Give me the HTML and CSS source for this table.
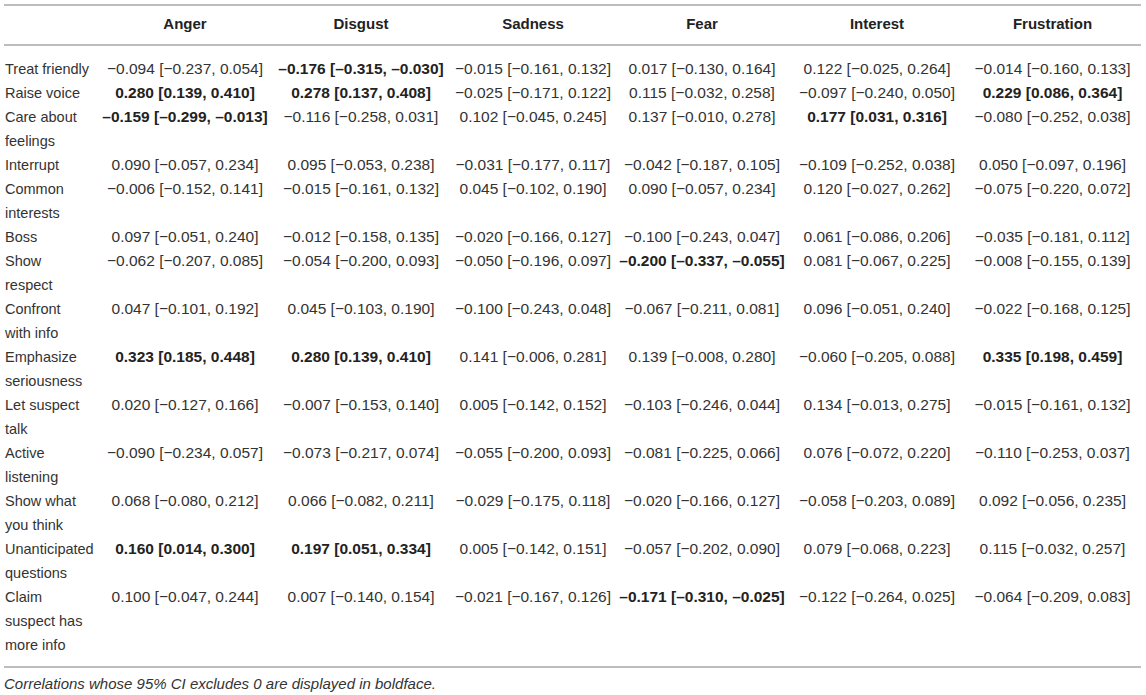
FILE: index.html
```html
<!DOCTYPE html>
<html lang="en">
<head>
  <meta charset="UTF-8" />
  <meta name="viewport" content="width=device-width, initial-scale=1.0" />
  <title>Correlations between interview behaviours and emotions</title>
  <link rel="stylesheet" href="styles.css">
</head>
<body>
  <table class="corr-table">
    <colgroup>
      <col class="col-label">
      <col class="col-anger">
      <col class="col-disgust">
      <col class="col-sadness">
      <col class="col-fear">
      <col class="col-interest">
      <col class="col-frustration">
    </colgroup>
    <thead>
      <tr>
        <th></th>
        <th>Anger</th>
        <th>Disgust</th>
        <th>Sadness</th>
        <th>Fear</th>
        <th>Interest</th>
        <th>Frustration</th>
      </tr>
    </thead>
    <tbody>
      <tr>
        <td class="label">Treat friendly</td>
        <td>−0.094 [−0.237, 0.054]</td>
        <td class="sig">–0.176 [–0.315, –0.030]</td>
        <td>−0.015 [−0.161, 0.132]</td>
        <td>0.017 [−0.130, 0.164]</td>
        <td>0.122 [−0.025, 0.264]</td>
        <td>−0.014 [−0.160, 0.133]</td>
      </tr>
      <tr>
        <td class="label">Raise voice</td>
        <td class="sig">0.280 [0.139, 0.410]</td>
        <td class="sig">0.278 [0.137, 0.408]</td>
        <td>−0.025 [−0.171, 0.122]</td>
        <td>0.115 [−0.032, 0.258]</td>
        <td>−0.097 [−0.240, 0.050]</td>
        <td class="sig">0.229 [0.086, 0.364]</td>
      </tr>
      <tr>
        <td class="label">Care about<br>feelings</td>
        <td class="sig">–0.159 [–0.299, –0.013]</td>
        <td>−0.116 [−0.258, 0.031]</td>
        <td>0.102 [−0.045, 0.245]</td>
        <td>0.137 [−0.010, 0.278]</td>
        <td class="sig">0.177 [0.031, 0.316]</td>
        <td>−0.080 [−0.252, 0.038]</td>
      </tr>
      <tr>
        <td class="label">Interrupt</td>
        <td>0.090 [−0.057, 0.234]</td>
        <td>0.095 [−0.053, 0.238]</td>
        <td>−0.031 [−0.177, 0.117]</td>
        <td>−0.042 [−0.187, 0.105]</td>
        <td>−0.109 [−0.252, 0.038]</td>
        <td>0.050 [−0.097, 0.196]</td>
      </tr>
      <tr>
        <td class="label">Common<br>interests</td>
        <td>−0.006 [−0.152, 0.141]</td>
        <td>−0.015 [−0.161, 0.132]</td>
        <td>0.045 [−0.102, 0.190]</td>
        <td>0.090 [−0.057, 0.234]</td>
        <td>0.120 [−0.027, 0.262]</td>
        <td>−0.075 [−0.220, 0.072]</td>
      </tr>
      <tr>
        <td class="label">Boss</td>
        <td>0.097 [−0.051, 0.240]</td>
        <td>−0.012 [−0.158, 0.135]</td>
        <td>−0.020 [−0.166, 0.127]</td>
        <td>−0.100 [−0.243, 0.047]</td>
        <td>0.061 [−0.086, 0.206]</td>
        <td>−0.035 [−0.181, 0.112]</td>
      </tr>
      <tr>
        <td class="label">Show<br>respect</td>
        <td>−0.062 [−0.207, 0.085]</td>
        <td>−0.054 [−0.200, 0.093]</td>
        <td>−0.050 [−0.196, 0.097]</td>
        <td class="sig">–0.200 [–0.337, –0.055]</td>
        <td>0.081 [−0.067, 0.225]</td>
        <td>−0.008 [−0.155, 0.139]</td>
      </tr>
      <tr>
        <td class="label">Confront<br>with info</td>
        <td>0.047 [−0.101, 0.192]</td>
        <td>0.045 [−0.103, 0.190]</td>
        <td>−0.100 [−0.243, 0.048]</td>
        <td>−0.067 [−0.211, 0.081]</td>
        <td>0.096 [−0.051, 0.240]</td>
        <td>−0.022 [−0.168, 0.125]</td>
      </tr>
      <tr>
        <td class="label">Emphasize<br>seriousness</td>
        <td class="sig">0.323 [0.185, 0.448]</td>
        <td class="sig">0.280 [0.139, 0.410]</td>
        <td>0.141 [−0.006, 0.281]</td>
        <td>0.139 [−0.008, 0.280]</td>
        <td>−0.060 [−0.205, 0.088]</td>
        <td class="sig">0.335 [0.198, 0.459]</td>
      </tr>
      <tr>
        <td class="label">Let suspect<br>talk</td>
        <td>0.020 [−0.127, 0.166]</td>
        <td>−0.007 [−0.153, 0.140]</td>
        <td>0.005 [−0.142, 0.152]</td>
        <td>−0.103 [−0.246, 0.044]</td>
        <td>0.134 [−0.013, 0.275]</td>
        <td>−0.015 [−0.161, 0.132]</td>
      </tr>
      <tr>
        <td class="label">Active<br>listening</td>
        <td>−0.090 [−0.234, 0.057]</td>
        <td>−0.073 [−0.217, 0.074]</td>
        <td>−0.055 [−0.200, 0.093]</td>
        <td>−0.081 [−0.225, 0.066]</td>
        <td>0.076 [−0.072, 0.220]</td>
        <td>−0.110 [−0.253, 0.037]</td>
      </tr>
      <tr>
        <td class="label">Show what<br>you think</td>
        <td>0.068 [−0.080, 0.212]</td>
        <td>0.066 [−0.082, 0.211]</td>
        <td>−0.029 [−0.175, 0.118]</td>
        <td>−0.020 [−0.166, 0.127]</td>
        <td>−0.058 [−0.203, 0.089]</td>
        <td>0.092 [−0.056, 0.235]</td>
      </tr>
      <tr>
        <td class="label">Unanticipated<br>questions</td>
        <td class="sig">0.160 [0.014, 0.300]</td>
        <td class="sig">0.197 [0.051, 0.334]</td>
        <td>0.005 [−0.142, 0.151]</td>
        <td>−0.057 [−0.202, 0.090]</td>
        <td>0.079 [−0.068, 0.223]</td>
        <td>0.115 [−0.032, 0.257]</td>
      </tr>
      <tr>
        <td class="label">Claim<br>suspect has<br>more info</td>
        <td>0.100 [−0.047, 0.244]</td>
        <td>0.007 [−0.140, 0.154]</td>
        <td>−0.021 [−0.167, 0.126]</td>
        <td class="sig">–0.171 [–0.310, –0.025]</td>
        <td>−0.122 [−0.264, 0.025]</td>
        <td>−0.064 [−0.209, 0.083]</td>
      </tr>
    </tbody>
  </table>
  <p class="note">Correlations whose 95% CI excludes 0 are displayed in boldface.</p>
</body>
</html>
```

FILE: styles.css
```css
body {
  font-family: "Liberation Sans", Arial, sans-serif;
  color: #333;
  background: white;
  margin: 0;
  padding: 4px;
}
.corr-table {
  width: 1137px;
  table-layout: fixed;
  border-collapse: collapse;
  border-top: 2px solid #bdbdbd;
  border-bottom: 2px solid #bdbdbd;
  font-size: 15.5px;
  line-height: 24px;
}
.col-label { width: 96px; }
.col-anger { width: 170px; }
.col-disgust { width: 182px; }
.col-sadness { width: 162px; }
.col-fear { width: 176px; }
.col-interest { width: 174px; }
.col-frustration { width: 177px; }
.corr-table th {
  font-size: 15px;
  font-weight: bold;
  color: #222;
  text-align: center;
  padding: 6px 0 8px;
  border-bottom: 2px solid #bdbdbd;
}
.corr-table td {
  padding: 0;
  text-align: center;
  vertical-align: top;
  white-space: nowrap;
}
.corr-table tbody tr:first-child td {
  padding-top: 11px;
}
.corr-table tbody tr:last-child td {
  padding-bottom: 9px;
}
.corr-table td.label {
  font-size: 14.5px;
  text-align: left;
  padding-left: 1px;
}
.corr-table td.sig {
  font-weight: bold;
  color: #222;
}
.note {
  margin: 6px 0 0;
  font-size: 15px;
  font-style: italic;
  line-height: 20px;
}
```
